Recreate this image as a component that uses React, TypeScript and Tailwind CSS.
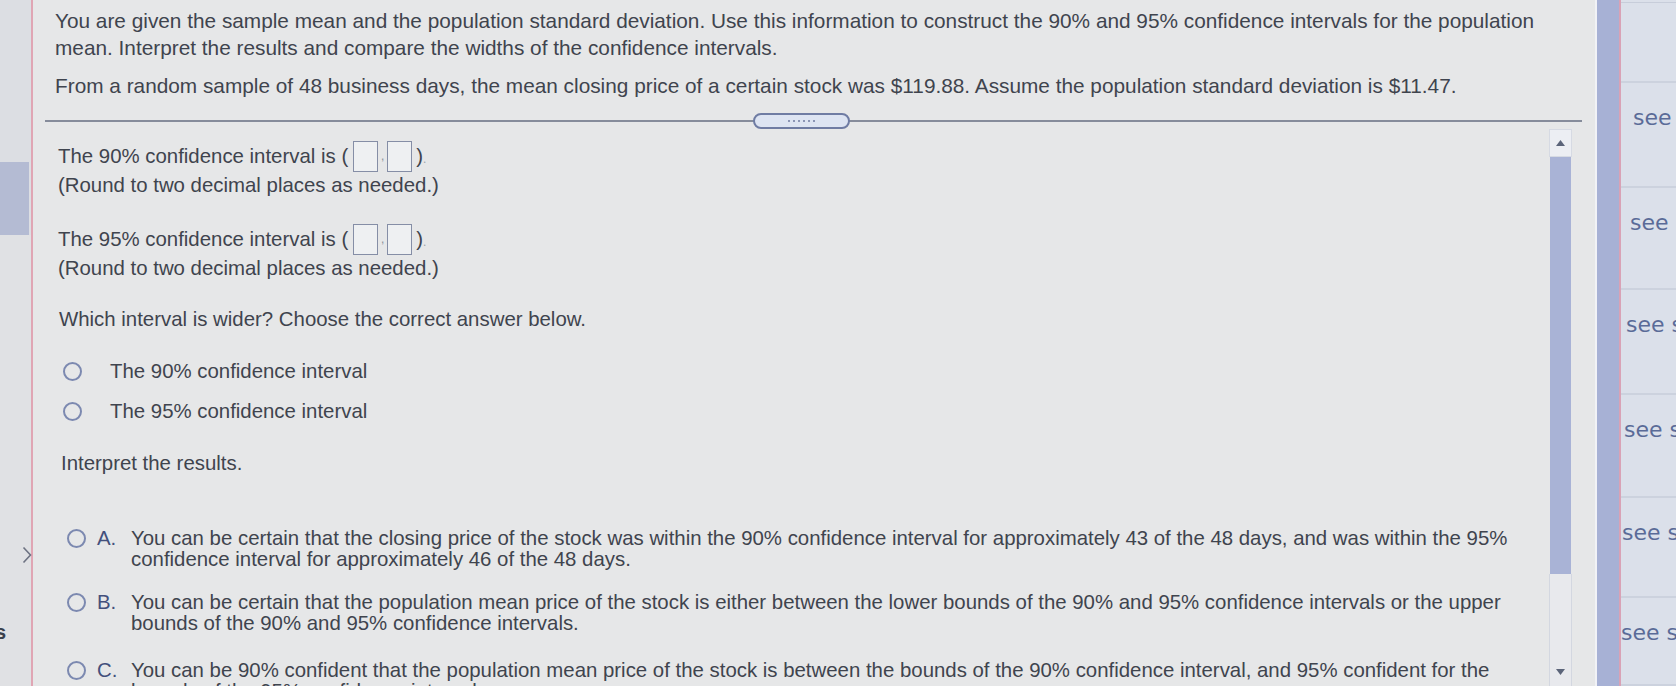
import React from "react";

function AnswerBox() {
  return (
    <span className="inline-block w-[25px] h-[31px] border border-[#858ea6] bg-[#eef0f2] align-middle" />
  );
}

function IntervalLine({ level }: { level: string }) {
  return (
    <div className="h-[29px] leading-[29px] whitespace-nowrap flex items-center">
      <span>The {level}% confidence interval is (</span>
      <span className="ml-[5px]">
        <AnswerBox />
      </span>
      <span className="w-[9px] text-center text-[12px] text-[#8a8f9a]">,</span>
      <AnswerBox />
      <span className="ml-[4px]">)</span>
      <span className="text-[12px] text-[#9aa0aa] mt-[6px]">.</span>
    </div>
  );
}

function Radio({ className = "" }: { className?: string }) {
  return (
    <span
      className={
        "inline-block w-[19px] h-[19px] rounded-full border-2 border-[#7c89b0] shrink-0 " + className
      }
    />
  );
}

const options = [
  {
    letter: "A.",
    lines: [
      "You can be certain that the closing price of the stock was within the 90% confidence interval for approximately 43 of the 48 days, and was within the 95%",
      "confidence interval for approximately 46 of the 48 days.",
    ],
    mt: "mt-[50px]",
  },
  {
    letter: "B.",
    lines: [
      "You can be certain that the population mean price of the stock is either between the lower bounds of the 90% and 95% confidence intervals or the upper",
      "bounds of the 90% and 95% confidence intervals.",
    ],
    mt: "mt-[22px]",
  },
  {
    letter: "C.",
    lines: [
      "You can be 90% confident that the population mean price of the stock is between the bounds of the 90% confidence interval, and 95% confident for the",
      "bounds of the 95% confidence interval.",
    ],
    mt: "mt-[26px]",
  },
];

// rows in the right-hand column, cut off by the screen edge
const seeRows = [
  { h: "h-[105px]", pl: "pl-[12px]" },
  { h: "h-[102px]", pl: "pl-[9px]" },
  { h: "h-[105px]", pl: "pl-[5px]" },
  { h: "h-[103px]", pl: "pl-[3px]" },
  { h: "h-[100px]", pl: "pl-[1px]" },
  { h: "flex-1", pl: "pl-[0px]" },
];

export default function App() {
  return (
    <div className="w-[1676px] h-[686px] overflow-hidden flex bg-[#e6e7e8] text-[#3f444e] font-['Liberation_Sans',Arial,sans-serif]">
      {/* left nav strip */}
      <div className="w-[33px] shrink-0 h-full flex flex-col bg-[#dcdee3] border-r-2 border-[#e0a6b4]">
        <div className="h-[162px] shrink-0" />
        <div className="h-[73px] shrink-0 bg-[#b4bbd3] mr-[2px]" />
        <div className="flex-1 flex flex-col bg-[#e0e1e4]">
          <svg className="ml-[22px] mt-[311px]" width="10" height="18" viewBox="0 0 10 18">
            <polyline points="1.5,1.5 8.5,9 1.5,16.5" fill="none" stroke="#6d7282" strokeWidth="1.6" />
          </svg>
          <span className="-ml-[5px] mt-[58px] text-[20px] leading-[20px] font-bold text-[#3b404c]">s</span>
        </div>
      </div>

      {/* question pane */}
      <div className="w-[1562px] shrink-0 h-full flex flex-col">
        <div className="pl-[22px] pt-[7px] text-[20.8px] leading-[27px]">
          <p className="whitespace-nowrap">
            You are given the sample mean and the population standard deviation. Use this information to construct the 90% and 95% confidence intervals for the population
          </p>
          <p className="whitespace-nowrap">
            mean. Interpret the results and compare the widths of the confidence intervals.
          </p>
          <p className="whitespace-nowrap mt-[11px]">
            From a random sample of 48 business days, the mean closing price of a certain stock was $119.88. Assume the population standard deviation is $11.47.
          </p>
        </div>

        <div className="relative mt-[21px] ml-[12px] mr-[13px] h-[2px] shrink-0 bg-[#868c9b]">
          <div className="absolute left-[708px] -top-[7px] w-[97px] h-[16px] rounded-full border-2 border-[#6f7ca3] bg-[#dde4f2] flex items-center justify-center gap-[3px]">
            {[0, 1, 2, 3, 4, 5].map((i) => (
              <span key={i} className="w-[2px] h-[2px] rounded-full bg-[#6f7ba0]" />
            ))}
          </div>
        </div>

        <div className="flex-1 flex min-h-0">
          <div className="flex-1 pl-[25px] pt-[20px] text-[20.4px]">
            <IntervalLine level="90" />
            <div className="h-[29px] leading-[29px] whitespace-nowrap">(Round to two decimal places as needed.)</div>
            <div className="mt-[25px]">
              <IntervalLine level="95" />
            </div>
            <div className="h-[29px] leading-[29px] whitespace-nowrap">(Round to two decimal places as needed.)</div>

            <div className="mt-[22px] h-[29px] leading-[29px] ml-[1px] whitespace-nowrap">
              Which interval is wider? Choose the correct answer below.
            </div>

            <div className="mt-[17px] flex flex-col">
              <label className="h-[40px] flex items-center">
                <Radio className="ml-[5px]" />
                <span className="ml-[28px] whitespace-nowrap">The 90% confidence interval</span>
              </label>
              <label className="h-[40px] flex items-center">
                <Radio className="ml-[5px]" />
                <span className="ml-[28px] whitespace-nowrap">The 95% confidence interval</span>
              </label>
            </div>

            <div className="mt-[18px] h-[29px] leading-[29px] ml-[3px] whitespace-nowrap">Interpret the results.</div>

            {options.map((o) => (
              <div key={o.letter} className={"flex items-start " + o.mt}>
                <Radio className="ml-[9px] mt-[1px]" />
                <span className="ml-[11px] w-[34px] leading-[21px] text-[#43507c]">{o.letter}</span>
                <div className="leading-[21px]">
                  {o.lines.map((l) => (
                    <p key={l} className="whitespace-nowrap">
                      {l}
                    </p>
                  ))}
                </div>
              </div>
            ))}
          </div>

          {/* inner scrollbar */}
          <div className="w-[23px] mr-[23px] mt-[7px] flex flex-col shrink-0">
            <div className="h-[28px] bg-[#eceef3] border border-[#d6dae3] flex items-center justify-center">
              <svg width="9" height="6" viewBox="0 0 9 6">
                <polygon points="0,6 4.5,0 9,6" fill="#5b6479" />
              </svg>
            </div>
            <div className="h-[417px] bg-[#a9b3d6] mx-[1px]" />
            <div className="flex-1 bg-[#e8e9ed] border-x border-[#d3d7e0] flex flex-col items-center justify-end pb-[11px]">
              <svg width="9" height="6" viewBox="0 0 9 6">
                <polygon points="0,0 9,0 4.5,6" fill="#5b6479" />
              </svg>
            </div>
          </div>
        </div>
      </div>

      {/* outer scrollbar */}
      <div className="w-[24px] shrink-0 h-full bg-[#a7b1d5] border-l-2 border-[#f1f2f6]" />
      <div className="w-[2px] shrink-0 h-full bg-[#d9a2b6]" />

      {/* side column */}
      <div className="flex-1 h-full overflow-hidden flex flex-col bg-[#dbe0ea] font-['DejaVu_Sans',sans-serif] text-[#5a6b98]">
        <div className="h-[3px] shrink-0 border-b border-[#c7cdda]" />
        <div className="h-[80px] shrink-0 border-b-2 border-[#ccd2de]" />
        {seeRows.map((r, i) => (
          <div
            key={i}
            className={
              "shrink-0 border-b-2 border-[#ccd2de] pt-[22px] whitespace-nowrap text-[22px] leading-[26px] " +
              r.h +
              " " +
              r.pl
            }
          >
            see score
          </div>
        ))}
      </div>
    </div>
  );
}
